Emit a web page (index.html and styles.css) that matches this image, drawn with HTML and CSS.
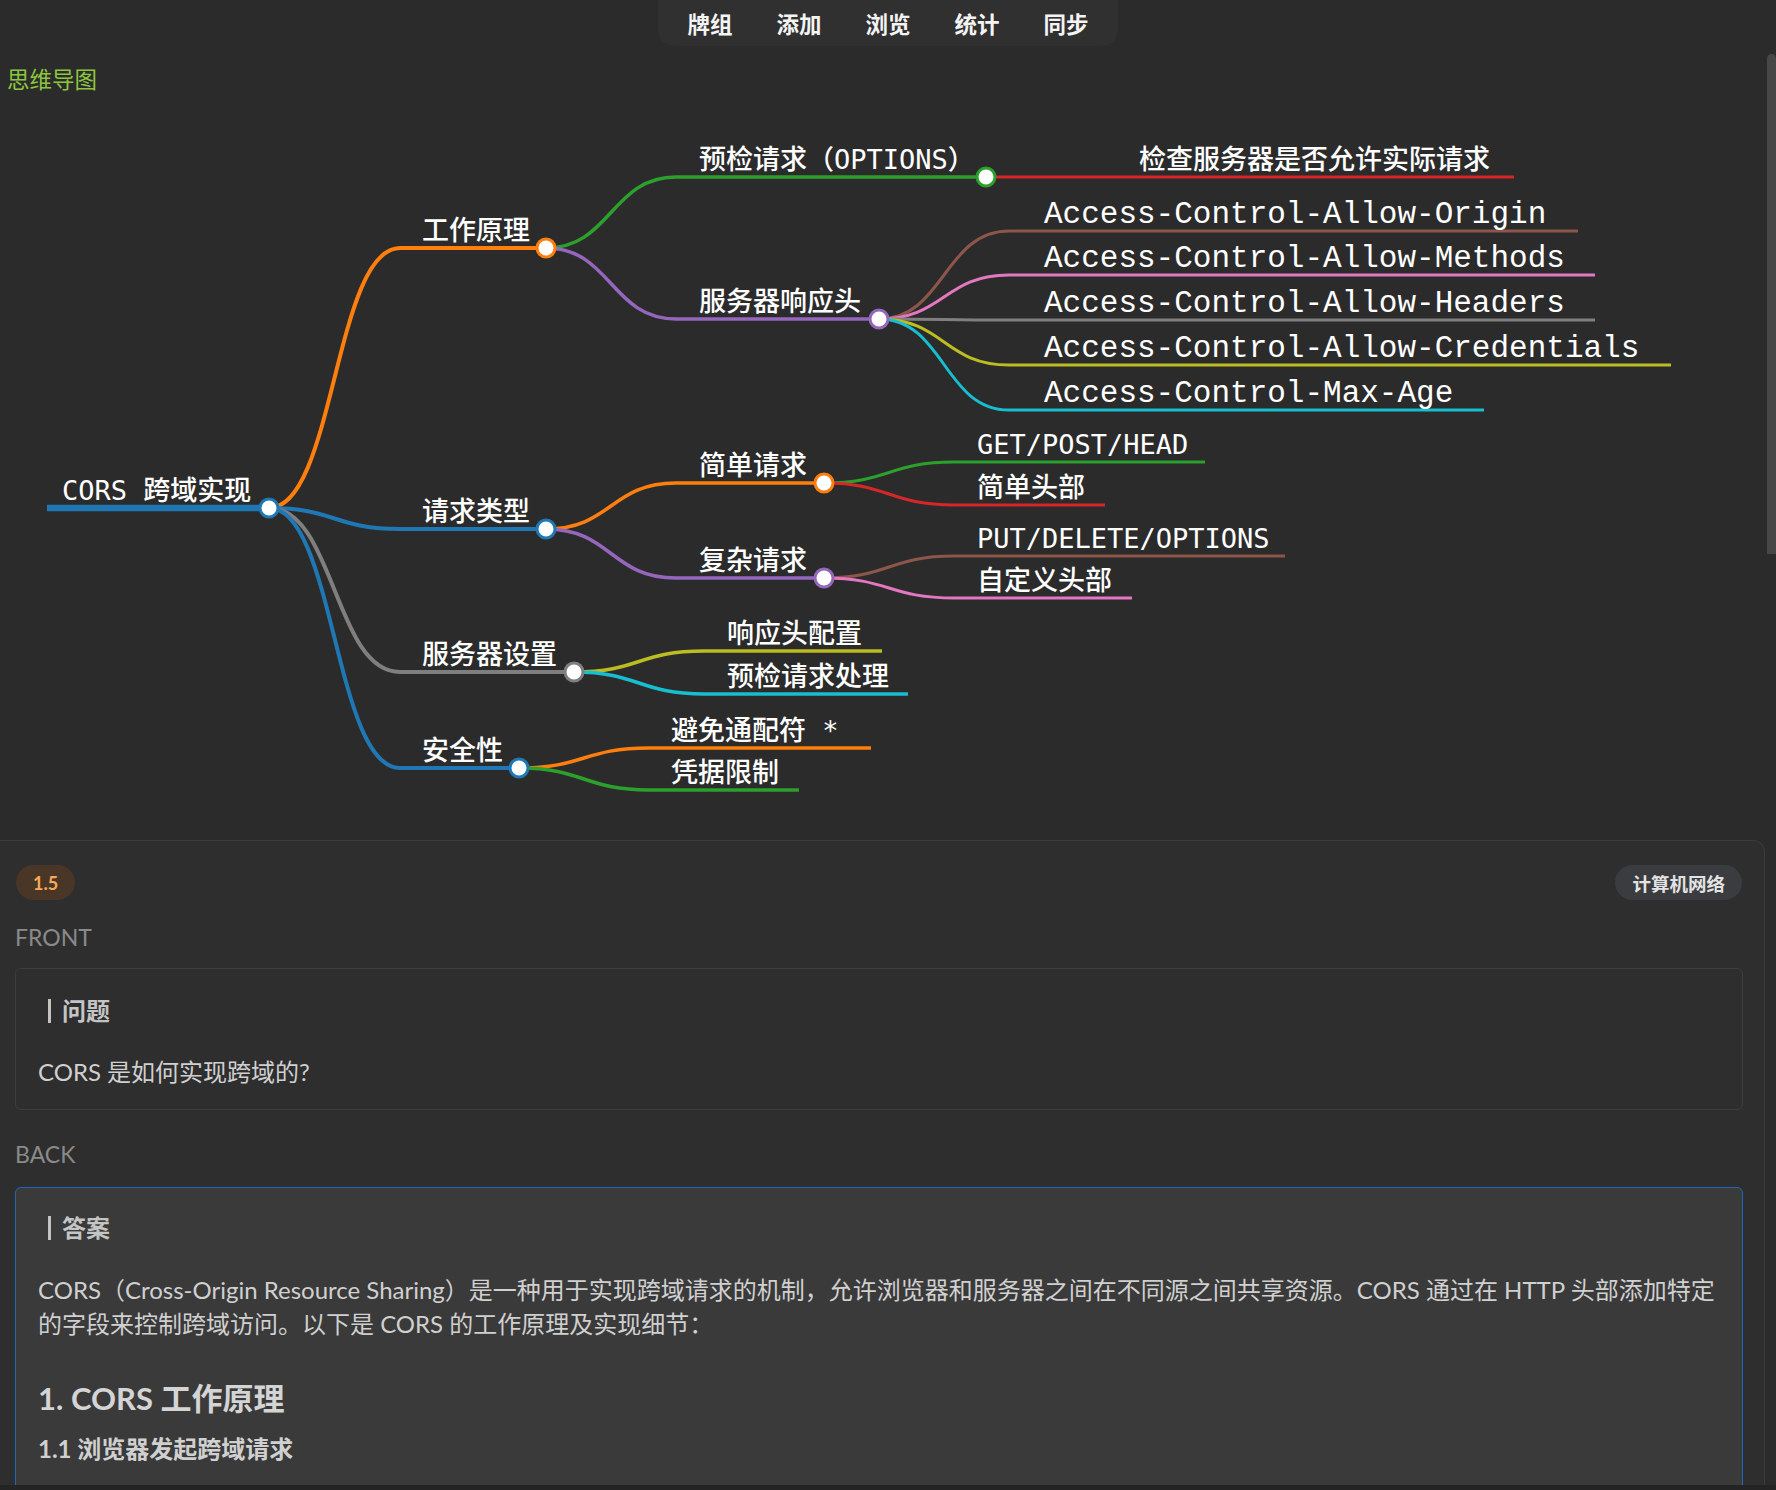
FILE: index.html
```html
<!DOCTYPE html>
<html lang="zh-CN">
<head>
<meta charset="utf-8">
<title>CORS 跨域实现</title>
<link rel="stylesheet" href="styles.css">
</head>
<body>
<div class="scroll-thumb"></div>
<header class="topbar">
  <nav class="tabs">
    <a class="tab">牌组</a>
    <a class="tab">添加</a>
    <a class="tab">浏览</a>
    <a class="tab">统计</a>
    <a class="tab">同步</a>
  </nav>
</header>

<div class="mm-title">思维导图</div>

<svg class="mindmap" width="1765" height="740" viewBox="0 100 1765 740" xmlns="http://www.w3.org/2000/svg">
  <g class="links">
    <path class="l0" stroke="#1f77b4" d="M47 508 H269"/>
    <path class="l1" stroke="#ff7f0e" d="M269 508 C334.5 508 334.5 248 400 248 H546"/>
    <path class="l1" stroke="#1f77b4" d="M269 508 C334.5 508 334.5 529 400 529 H546"/>
    <path class="l1" stroke="#7f7f7f" d="M269 508 C334.5 508 334.5 672 400 672 H574"/>
    <path class="l1" stroke="#1f77b4" d="M269 508 C334.5 508 334.5 768 400 768 H519"/>

    <path class="l2" stroke="#2ca02c" d="M546 248 C611 248 611 177 676 177 H986"/>
    <path class="l2" stroke="#9467bd" d="M546 248 C611 248 611 319 676 319 H879"/>
    <path class="l2" stroke="#ff7f0e" d="M546 529 C611 529 611 483 676 483 H824"/>
    <path class="l2" stroke="#9467bd" d="M546 529 C611 529 611 578 676 578 H824"/>
    <path class="l2" stroke="#bcbd22" d="M574 672 C639 672 639 651 704 651 H882"/>
    <path class="l2" stroke="#17becf" d="M574 672 C639 672 639 694 704 694 H908"/>
    <path class="l2" stroke="#ff7f0e" d="M519 768 C584 768 584 748 649 748 H871"/>
    <path class="l2" stroke="#2ca02c" d="M519 768 C584 768 584 790 649 790 H799"/>

    <path class="l3" stroke="#d62728" d="M986 177 H1514"/>
    <path class="l3" stroke="#8c564b" d="M879 319 C944 319 944 231 1009 231 H1578"/>
    <path class="l3" stroke="#e377c2" d="M879 319 C944 319 944 275 1009 275 H1595"/>
    <path class="l3" stroke="#7f7f7f" d="M879 319 C944 319 944 320 1009 320 H1595"/>
    <path class="l3" stroke="#bcbd22" d="M879 319 C944 319 944 365 1009 365 H1671"/>
    <path class="l3" stroke="#17becf" d="M879 319 C944 319 944 410 1009 410 H1484"/>
    <path class="l3" stroke="#2ca02c" d="M824 483 C889 483 889 462 954 462 H1205"/>
    <path class="l3" stroke="#d62728" d="M824 483 C889 483 889 505 954 505 H1105"/>
    <path class="l3" stroke="#8c564b" d="M824 578 C889 578 889 556 954 556 H1285"/>
    <path class="l3" stroke="#e377c2" d="M824 578 C889 578 889 598 954 598 H1132"/>
  </g>

  <g class="dots">
    <circle cx="269" cy="508" r="9" stroke="#1f77b4"/>
    <circle cx="546" cy="248" r="9" stroke="#ff7f0e"/>
    <circle cx="546" cy="529" r="9" stroke="#1f77b4"/>
    <circle cx="574" cy="672" r="9" stroke="#7f7f7f"/>
    <circle cx="519" cy="768" r="9" stroke="#1f77b4"/>
    <circle cx="986" cy="177" r="9" stroke="#2ca02c"/>
    <circle cx="879" cy="319" r="9" stroke="#9467bd"/>
    <circle cx="824" cy="483" r="9" stroke="#ff7f0e"/>
    <circle cx="824" cy="578" r="9" stroke="#9467bd"/>
  </g>

  <g class="labels">
    <text class="mm-text" x="62" y="500" xml:space="preserve">CORS 跨域实现</text>
    <text class="mm-text" x="422" y="240">工作原理</text>
    <text class="mm-text" x="422" y="521">请求类型</text>
    <text class="mm-text" x="422" y="664">服务器设置</text>
    <text class="mm-text" x="422" y="760">安全性</text>

    <text class="mm-text" x="699" y="169">预检请求（OPTIONS）</text>
    <text class="mm-text" x="699" y="311">服务器响应头</text>
    <text class="mm-text" x="699" y="475">简单请求</text>
    <text class="mm-text" x="699" y="570">复杂请求</text>
    <text class="mm-text" x="727" y="643">响应头配置</text>
    <text class="mm-text" x="727" y="686">预检请求处理</text>
    <text class="mm-text" x="671" y="740" xml:space="preserve">避免通配符 *</text>
    <text class="mm-text" x="671" y="782">凭据限制</text>

    <text class="mm-text" x="1139" y="169">检查服务器是否允许实际请求</text>
    <text class="mm-code" x="1044" y="223">Access-Control-Allow-Origin</text>
    <text class="mm-code" x="1044" y="267">Access-Control-Allow-Methods</text>
    <text class="mm-code" x="1044" y="312">Access-Control-Allow-Headers</text>
    <text class="mm-code" x="1044" y="357">Access-Control-Allow-Credentials</text>
    <text class="mm-code" x="1044" y="402">Access-Control-Max-Age</text>
    <text class="mm-text" x="977" y="454">GET/POST/HEAD</text>
    <text class="mm-text" x="977" y="497">简单头部</text>
    <text class="mm-text" x="977" y="548">PUT/DELETE/OPTIONS</text>
    <text class="mm-text" x="977" y="590">自定义头部</text>
  </g>
</svg>

<section class="card">
  <div class="card-head">
    <span class="badge badge-level">1.5</span>
    <span class="badge badge-tag">计算机网络</span>
  </div>

  <div class="side-label front-label">FRONT</div>
  <div class="face face-front">
    <h4 class="face-title"><span class="face-bar">问题</span></h4>
    <p class="face-text">CORS 是如何实现跨域的?</p>
  </div>

  <div class="side-label back-label">BACK</div>
  <div class="face face-back">
    <h4 class="face-title"><span class="face-bar">答案</span></h4>
    <p class="face-text answer-intro">CORS（Cross-Origin Resource Sharing）是一种用于实现跨域请求的机制，允许浏览器和服务器之间在不同源之间共享资源。CORS 通过在 HTTP 头部添加特定的字段来控制跨域访问。以下是 CORS 的工作原理及实现细节：</p>
    <h2 class="ans-h2">1. CORS 工作原理</h2>
    <h3 class="ans-h3">1.1 浏览器发起跨域请求</h3>
  </div>
</section>
<div class="bottom-edge"></div>
</body>
</html>
```

FILE: styles.css
```css
* {
  box-sizing: border-box;
}

html, body {
  margin: 0;
  padding: 0;
}

body {
  background: #2b2b2b;
  color: #d0d0d0;
  font-family: "Lato", "Noto Sans CJK SC", sans-serif;
  font-size: 24px;
  overflow: hidden;
  height: 1490px;
}

/* ---------- top tabs ---------- */
.topbar {
  display: flex;
  justify-content: center;
}

.tabs {
  display: flex;
  align-items: center;
  height: 46px;
  padding: 0 7px;
  background: #303030;
  border-radius: 0 0 16px 16px;
}

.tab {
  padding: 0 22px;
  font-family: "Noto Sans CJK SC", sans-serif;
  font-weight: 700;
  font-size: 22.5px;
  line-height: 46px;
  color: #f4f4f4;
}

/* ---------- mind map ---------- */
.mm-title {
  margin-top: 15px;
  padding-left: 7px;
  font-family: "Noto Sans CJK SC", sans-serif;
  font-size: 22.5px;
  line-height: 34px;
  color: #8cc63f;
}

.mindmap {
  display: block;
  margin-top: 5px;
}

.links path {
  fill: none;
  stroke-linecap: butt;
}

.l0 { stroke-width: 6.5; }
.l1 { stroke-width: 4; }
.l2 { stroke-width: 3.5; }
.l3 { stroke-width: 3; }

.dots circle {
  fill: #ffffff;
  stroke-width: 3;
}

.mm-text {
  font-family: "DejaVu Sans Mono", "Noto Sans CJK SC", monospace;
  font-size: 27px;
  font-weight: 500;
  fill: #ffffff;
}

.mm-code {
  font-family: "Liberation Mono", monospace;
  font-size: 31px;
  fill: #ffffff;
}

/* ---------- card ---------- */
.card {
  width: 1765px;
  height: 660px;
  padding: 24px 21px 0 15px;
  background: #2e2e2e;
  border: 1px solid #3c3c3c;
  border-left: 0;
  border-bottom: 0;
  border-radius: 0 12px 0 0;
  overflow: hidden;
}

.card-head {
  display: flex;
  justify-content: space-between;
  align-items: center;
  padding: 0 1px 0 1px;
}

.badge {
  display: inline-flex;
  align-items: center;
  height: 35px;
  padding: 0 17px;
  border-radius: 18px;
  font-family: "Lato", "Noto Sans CJK SC", sans-serif;
  font-weight: 700;
  font-size: 18px;
}

.badge-level {
  background: #4a3627;
  color: #f6a957;
}

.badge-tag {
  padding: 0 17px;
  font-size: 18.5px;
  background: #3b3c3f;
  color: #e2e2e2;
}

.side-label {
  font-size: 23px;
  line-height: 34px;
  color: #8a8a8a;
}

.front-label {
  margin: 20px 0 14px;
}

.back-label {
  margin: 27px 0 16px;
}

.face {
  border-radius: 6px;
  padding: 24px 22px 20px;
}

.face-front {
  border: 1px solid #3d3d3d;
  background: #2e2e2e;
}

.face-back {
  border: 1px solid #2068b6;
  background: #3a3a3a;
  padding-top: 22px;
  min-height: 400px;
}

.face-title {
  margin: 0;
  padding-left: 10px;
  height: 36px;
  display: flex;
  align-items: center;
  font-size: 24px;
  font-weight: 700;
  color: #c4c4c4;
}

.face-bar {
  display: inline-block;
  height: 24px;
  line-height: 24px;
  padding-left: 11px;
  border-left: 3px solid #c4c4c4;
}

.face-text {
  margin: 26px 0 0;
  font-size: 24px;
  line-height: 34px;
  color: #d0d0d0;
}

.answer-intro {
  margin-top: 27px;
}

.ans-h2 {
  margin: 37px 0 0;
  font-size: 31px;
  line-height: 40px;
  font-weight: 700;
  color: #d4d4d4;
}

.ans-h3 {
  margin: 14px 0 0;
  font-size: 24px;
  line-height: 34px;
  font-weight: 700;
  color: #d0d0d0;
}

/* ---------- overlays ---------- */
.scroll-thumb {
  position: fixed;
  top: 54px;
  right: 0;
  width: 9px;
  height: 500px;
  background: #474747;
  border-radius: 5px 5px 0 0;
}

.bottom-edge {
  position: fixed;
  left: 0;
  right: 0;
  bottom: 0;
  height: 5px;
  background: #242424;
}
```
